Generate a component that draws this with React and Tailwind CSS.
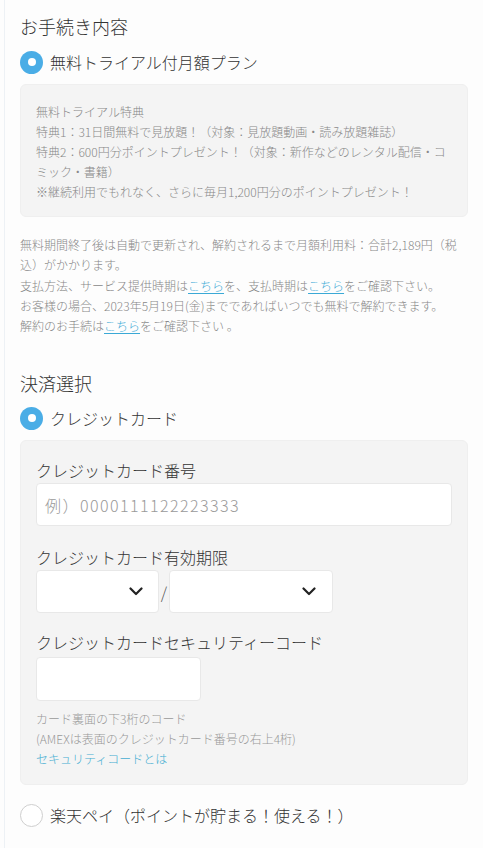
import React from "react";

const font = { fontFamily: '"Noto Sans CJK JP", "Noto Sans", sans-serif' };

function Radio({ checked, label }) {
  return (
    <div className="flex items-center h-[24px]">
      {checked ? (
        <span className="w-[23px] h-[23px] rounded-full bg-[#4aade6] flex items-center justify-center shrink-0">
          <span className="w-[8px] h-[8px] rounded-full bg-white" />
        </span>
      ) : (
        <span className="w-[23px] h-[23px] rounded-full bg-white border border-[#cfcfcf] shrink-0" />
      )}
      <span className="ml-[7px] text-[16px] leading-[24px] text-[#333] font-light">{label}</span>
    </div>
  );
}

function Chevron() {
  return (
    <svg width="14" height="9" viewBox="0 0 14 9" fill="none">
      <path d="M1.5 1.5 L7 7 L12.5 1.5" stroke="#222" strokeWidth="2.2" strokeLinecap="round" strokeLinejoin="round" />
    </svg>
  );
}

function Link({ children }) {
  return <span className="text-[#3aa9d6] underline underline-offset-2">{children}</span>;
}

export default function App() {
  return (
    <div className="min-h-[848px] bg-[#fdfdfd] pl-[4px] font-light" style={font}>
      <div className="min-h-[848px] border-l border-[#edf1f5] pl-[15px] pr-[15px] pt-[12px] pb-[20px]">
        <h2 className="text-[18px] leading-[28px] text-[#333] font-light">お手続き内容</h2>
        <div className="mt-[10px]">
          <Radio checked label="無料トライアル付月額プラン" />
        </div>
        <div className="mt-[10px] bg-[#f4f4f4] border border-[#efefef] rounded-[6px] pt-[17px] pb-[14px] px-[15px] text-[12px] leading-[20px] text-[#888]">
          <p>無料トライアル特典</p>
          <p>特典1：31日間無料で見放題！（対象：見放題動画・読み放題雑誌）</p>
          <p>特典2：600円分ポイントプレゼント！（対象：新作などのレンタル配信・コミック・書籍）</p>
          <p>※継続利用でもれなく、さらに毎月1,200円分のポイントプレゼント！</p>
        </div>
        <div className="mt-[18px] text-[12px] leading-[20.3px] text-[#888] pr-[4px]">
          <p>無料期間終了後は自動で更新され、解約されるまで月額利用料：合計2,189円（税込）がかかります。</p>
          <p>
            支払方法、サービス提供時期は<Link>こちら</Link>を、支払時期は<Link>こちら</Link>をご確認下さい。
          </p>
          <p>お客様の場合、2023年5月19日(金)までであればいつでも無料で解約できます。</p>
          <p>
            解約のお手続は<Link>こちら</Link>をご確認下さい 。
          </p>
        </div>
        <h2 className="mt-[33px] text-[18px] leading-[28px] text-[#333] font-light">決済選択</h2>
        <div className="mt-[9px]">
          <Radio checked label="クレジットカード" />
        </div>
        <div className="mt-[10px] bg-[#f4f4f4] border border-[#efefef] rounded-[6px] pt-[17px] pb-[15px] px-[15px]">
          <p className="text-[16px] leading-[24px] text-[#333]">クレジットカード番号</p>
          <div className="mt-[1px] h-[43px] w-full bg-white border border-[#e8e8e8] rounded-[4px] flex items-center px-[8px]">
            <span className="text-[16px] text-[#9a9a9a] tracking-[0.09em]">例）0000111122223333</span>
          </div>
          <p className="mt-[19px] text-[16px] leading-[24px] text-[#333]">クレジットカード有効期限</p>
          <div className="mt-[1px] flex items-center">
            <div className="h-[43px] w-[123px] bg-white border border-[#e8e8e8] rounded-[4px] flex items-center justify-end pr-[15px]">
              <Chevron />
            </div>
            <span className="w-[10px] text-center text-[16px] text-[#555]">/</span>
            <div className="h-[43px] w-[164px] bg-white border border-[#e8e8e8] rounded-[4px] flex items-center justify-end pr-[16px]">
              <Chevron />
            </div>
          </div>
          <p className="mt-[17px] text-[16px] leading-[24px] text-[#333]">クレジットカードセキュリティーコード</p>
          <div className="mt-[3px] h-[44px] w-[165px] bg-white border border-[#e8e8e8] rounded-[4px]" />
          <div className="mt-[8px] text-[12px] leading-[20px] text-[#999]">
            <p>カード裏面の下3桁のコード</p>
            <p>(AMEXは表面のクレジットカード番号の右上4桁)</p>
            <p className="text-[#46aed2]">セキュリティコードとは</p>
          </div>
        </div>
        <div className="mt-[18px]">
          <Radio label="楽天ペイ（ポイントが貯まる！使える！）" />
        </div>
      </div>
    </div>
  );
}
